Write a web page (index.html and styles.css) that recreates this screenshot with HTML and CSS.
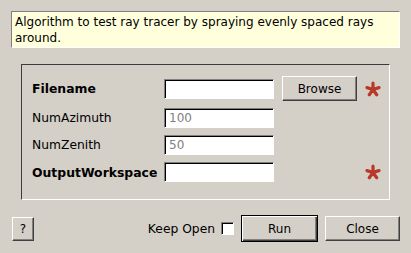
FILE: index.html
```html
<!DOCTYPE html>
<html lang="en">
<head>
  <meta charset="UTF-8">
  <title>RayTracerTester</title>
  <link rel="stylesheet" href="styles.css">
</head>
<body>

  <div class="dialog">
    <div class="description">Algorithm to test ray tracer by spraying evenly spaced rays around.</div>

    <div class="properties">
      <label class="required">Filename</label>
      <input type="text" class="field">
      <button class="btn">Browse</button>
      <span class="star">
        <svg width="16" height="16" viewBox="0 0 16 16"><path d="M8 8.5L8 2.2M8 8.5L14 6.6M8 8.5L2 6.6M8 8.5L11.7 13.7M8 8.5L4.3 13.7" /></svg>
      </span>

      <label>NumAzimuth</label>
      <input type="text" class="field" placeholder="100">
      <span></span>
      <span></span>

      <label>NumZenith</label>
      <input type="text" class="field" placeholder="50">
      <span></span>
      <span></span>

      <label class="required">OutputWorkspace</label>
      <input type="text" class="field">
      <span></span>
      <span class="star">
        <svg width="16" height="16" viewBox="0 0 16 16"><path d="M8 8.5L8 2.2M8 8.5L14 6.6M8 8.5L2 6.6M8 8.5L11.7 13.7M8 8.5L4.3 13.7" /></svg>
      </span>
    </div>

    <div class="footer">
      <button class="btn help">?</button>
      <span class="spacer"></span>
      <label class="keep-open">Keep Open <span class="checkbox"></span></label>
      <button class="btn run">Run</button>
      <button class="btn">Close</button>
    </div>
  </div>

</body>
</html>
```

FILE: styles.css
```css
body {
  margin: 0;
  background: #d4d0c8;
  font-family: 'DejaVu Sans', sans-serif;
  font-size: 12px;
  color: #000;
}

.dialog {
  padding: 11px;
}

.description {
  box-sizing: border-box;
  height: 37px;
  padding: 2px 3px;
  line-height: 16px;
  background: #ffffdc;
  border: 1px solid #fff;
  border-top-color: #808080;
  border-left-color: #808080;
}

.properties {
  margin: 16px 10px 0;
  padding: 11px 10px 17px;
  border: 1px solid #fff;
  border-top-color: #3c3c3c;
  border-left-color: #3c3c3c;
  display: grid;
  grid-template-columns: 124px 110px 75px 16px;
  grid-template-rows: 25px 20px 20px 20px;
  column-gap: 8px;
  row-gap: 7px;
  align-items: center;
}

.properties label {
  font-size: 12.3px;
}

.properties label.required {
  font-weight: bold;
  font-size: 12.4px;
}

.field {
  box-sizing: border-box;
  width: 110px;
  height: 20px;
  margin: 0;
  padding: 0 4px;
  font: inherit;
  background: #fff;
  border: 1px solid #fff;
  border-top-color: #808080;
  border-left-color: #808080;
  box-shadow: inset 1px 1px 0 #000;
  outline: none;
}

.field::placeholder {
  color: #808080;
}

.btn {
  box-sizing: border-box;
  width: 75px;
  height: 25px;
  margin: 0;
  padding: 0;
  font: inherit;
  color: #000;
  background: #d4d0c8;
  border: 1px solid #404040;
  border-top-color: #fff;
  border-left-color: #fff;
  box-shadow: inset -1px -1px 0 #808080;
}

.star {
  display: flex;
  align-items: center;
}

.star path {
  fill: none;
  stroke: #b8392b;
  stroke-width: 3.2;
  stroke-linecap: round;
}

.footer {
  margin: 15px 0 0 1px;
  height: 27px;
  display: flex;
  align-items: center;
}

.btn.help {
  width: 22px;
  height: 24px;
}

.spacer {
  flex: 1;
}

.keep-open {
  display: flex;
  align-items: center;
  gap: 6px;
  margin-right: 7px;
  font-size: 12.3px;
}

.checkbox {
  box-sizing: border-box;
  width: 13px;
  height: 13px;
  background: #fff;
  border: 1px solid #fff;
  border-top-color: #808080;
  border-left-color: #808080;
  box-shadow: inset 1px 1px 0 #000;
}

.btn.run {
  width: 77px;
  height: 27px;
  border: 1px solid #000;
  box-shadow: inset 1px 1px 0 #fff, inset -1px -1px 0 #404040, inset -2px -2px 0 #808080;
  margin-right: 7px;
}
```
